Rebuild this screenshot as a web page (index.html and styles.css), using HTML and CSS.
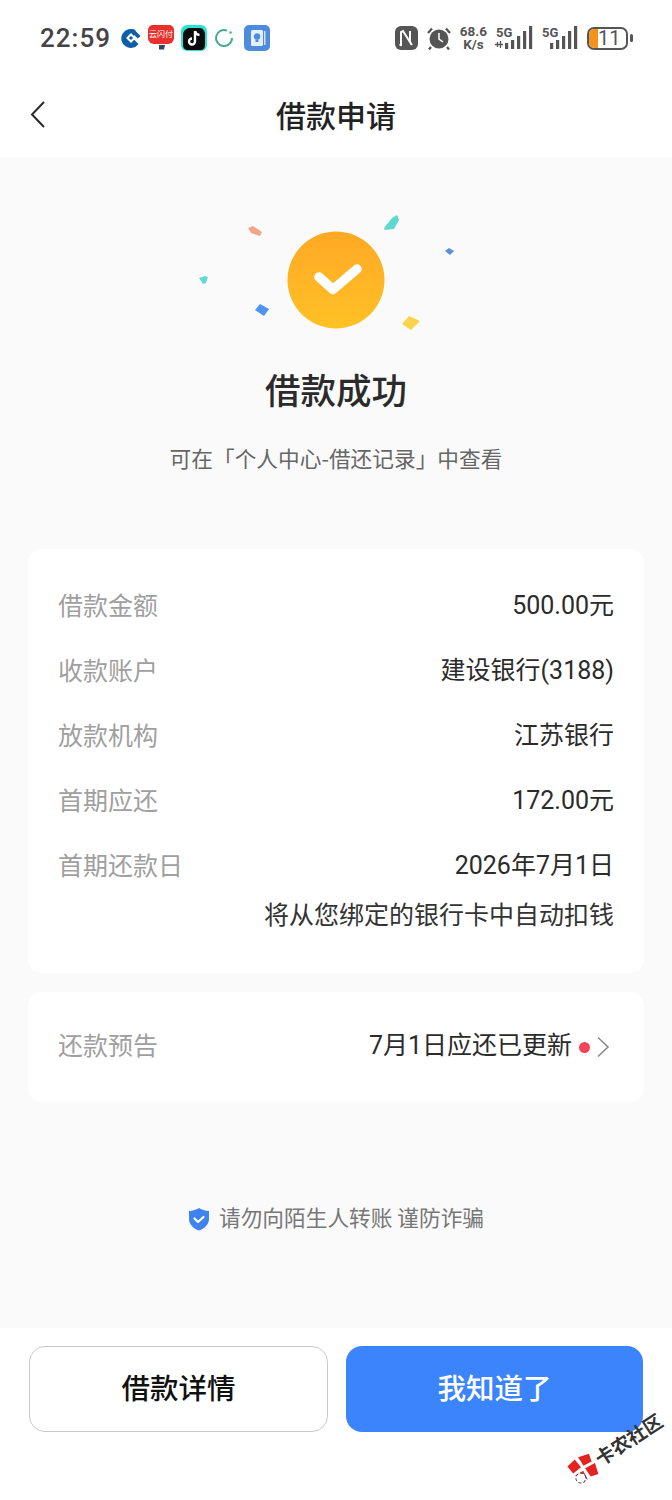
FILE: index.html
```html
<!DOCTYPE html>
<html lang="zh-CN">
<head>
<meta charset="utf-8">
<title>借款申请</title>
<link rel="stylesheet" href="styles.css">
</head>
<body>
<div class="page">
  <header class="top">
    <div class="status">
      <div class="status-left">
        <span class="time">22:59</span>
        <svg class="ic" width="20" height="20" viewBox="0 0 20 20"><path d="M14.500 2.200A9.500 9.500 0 1 0 17.500 16L12 10.500z" fill="#0f5ea8"/><path d="M12.500 1 19.500 8 16.800 10.500 10 4z" fill="#0f5ea8"/><rect x="6.500" y="6.500" width="7" height="7" transform="rotate(45 10 10)" fill="#fff"/><rect x="8.500" y="8.500" width="3" height="3" transform="rotate(45 10 10)" fill="#0f5ea8"/></svg>
        <svg class="ic" width="26" height="26" viewBox="0 0 26 26"><path d="M5 0h16a5 5 0 0 1 5 5v8a6 6 0 0 1-6 6H6a6 6 0 0 1-6-6V5a5 5 0 0 1 5-5z" fill="#e8302c"/><text x="13" y="11.500" text-anchor="middle" class="tiny">云闪付</text><path d="M11 20h6l-1 4.500h-5z" fill="#33475f"/></svg>
        <svg class="ic" width="26" height="26" viewBox="0 0 26 26"><rect width="26" height="26" rx="6" fill="#2ae3d8"/><path d="M2 10c0-4 3-7 7-7h10c3 0 5 3 5 7v10c0 3-2 5-4 5H7c-3 0-5-2-5-5z" fill="#0b0b0d"/><path d="M14 6v10.500a3 3 0 1 1-3-3M14 6c.5 2.500 2 3.800 4.500 4" fill="none" stroke="#fff" stroke-width="2.400"/></svg>
        <svg class="ic ic-ring" width="20" height="20" viewBox="0 0 20 20"><path d="M13 2.600A8 8 0 1 0 18 10" fill="none" stroke="#45ab8f" stroke-width="2"/><circle cx="16.500" cy="4.500" r="1.200" fill="#45ab8f"/></svg>
        <svg class="ic" width="26" height="26" viewBox="0 0 26 26"><rect width="26" height="26" rx="5" fill="#4f8bdc"/><rect x="7" y="5" width="12" height="16" rx="1.500" fill="#e6f0fc"/><rect x="20" y="6" width="1.500" height="14" fill="#cfe0f7"/><circle cx="13" cy="11.500" r="3.200" fill="#4f8bdc"/><rect x="11.500" y="14.500" width="3" height="2.500" fill="#4f8bdc"/></svg>
      </div>
      <div class="status-right">
        <svg width="23" height="24" viewBox="0 0 23 24"><rect width="23" height="24" rx="6" fill="#555"/><path d="M6 20V6l2-1 7 11V5M6 20l-1-2M17 19l-2-3" fill="none" stroke="#fff" stroke-width="2"/></svg>
        <svg class="alarm" width="24" height="24" viewBox="0 0 24 24"><circle cx="12" cy="13" r="9.500" fill="#555"/><path d="M12 7v6l4 3" fill="none" stroke="#fff" stroke-width="1.500"/><path d="M1 7 5 2.500M23 7l-4-4.500M4 21l-2 2.500M20 21l2 2.500" stroke="#555" stroke-width="2.200"/></svg>
        <span class="speed"><span>68.6</span><span>K/s</span></span>
        <span class="sig sig-a">
          <span class="g5">5G</span>
          <svg width="38" height="24" viewBox="0 0 38 24"><path d="M2.500 16v5M5.500 15v7M0 18.500h8" stroke="#555" stroke-width="1.300" fill="none"/><rect x="10" y="17" width="3.200" height="6" fill="#555"/><rect x="16" y="14" width="3.200" height="9" fill="#555"/><rect x="22" y="10" width="3.200" height="13" fill="#555"/><rect x="28" y="5" width="3.200" height="18" fill="#555"/><rect x="34" y="0" width="3.200" height="23" fill="#555"/></svg>
        </span>
        <span class="sig sig-b">
          <span class="g5">5G</span>
          <svg width="28" height="24" viewBox="0 0 28 24"><rect x="0" y="17" width="3.200" height="6" fill="#555"/><rect x="6" y="14" width="3.200" height="9" fill="#555"/><rect x="12" y="10" width="3.200" height="13" fill="#555"/><rect x="18" y="5" width="3.200" height="18" fill="#555"/><rect x="24" y="0" width="3.200" height="23" fill="#555"/></svg>
        </span>
        <span class="battery"><span class="cell"><span class="fill"></span><span class="lvl">11</span></span><span class="nub"></span></span>
      </div>
    </div>
    <div class="nav">
      <svg class="back" width="18" height="30" viewBox="0 0 18 30"><path d="M15 2 3 14.500 15 27" fill="none" stroke="#2a2a2a" stroke-width="2"/></svg>
      <h1 class="nav-title">借款申请</h1>
    </div>
  </header>

  <main class="main">
    <section class="hero">
      <svg class="burst" width="270" height="120" viewBox="0 0 270 120">
        <defs><linearGradient id="g" x1="0" y1="0" x2="0" y2="1"><stop offset="0" stop-color="#ffa925"/><stop offset="1" stop-color="#ffc125"/></linearGradient></defs>
        <circle cx="135" cy="70" r="48.500" fill="url(#g)"/>
        <path d="M118 67 132 79.500 156 59" fill="none" stroke="#fff" stroke-width="9.500" stroke-linecap="round" stroke-linejoin="round"/>
        <path d="M47 18l5-2 9 6-2 4-9-3z" fill="#f6a488"/>
        <path d="M183 18l8-10 5-3 2 5-5 9-9 1z" fill="#5fd8d0"/>
        <path d="M244 41l4-3 5 3-4 4z" fill="#5c8fdb"/>
        <path d="M-2 68l6-2 3 1-2 6-3 1z" fill="#62d9d2"/>
        <path d="M54 100l5-6 9 5-5 7z" fill="#4f93f3"/>
        <path d="M201 114l7-8 11 5-9 9z" fill="#fcd34f"/>
      </svg>
      <h2 class="hero-title">借款成功</h2>
      <p class="hero-sub">可在「个人中心-借还记录」中查看</p>
    </section>

    <section class="card info">
      <div class="row"><span class="label">借款金额</span><span class="value">500.00元</span></div>
      <div class="row"><span class="label">收款账户</span><span class="value">建设银行(3188)</span></div>
      <div class="row"><span class="label">放款机构</span><span class="value">江苏银行</span></div>
      <div class="row"><span class="label">首期应还</span><span class="value">172.00元</span></div>
      <div class="row"><span class="label">首期还款日</span><span class="value">2026年7月1日</span></div>
      <div class="note">将从您绑定的银行卡中自动扣钱</div>
    </section>

    <section class="card notice">
      <span class="label">还款预告</span>
      <span class="notice-right">
        <span class="value">7月1日应还已更新</span>
        <span class="dot"></span>
        <svg width="14" height="22" viewBox="0 0 14 22"><path d="M2 1.500 12 11 2 20.500" fill="none" stroke="#8b8b8b" stroke-width="1.600"/></svg>
      </span>
    </section>

    <div class="safety">
      <svg width="22" height="24" viewBox="0 0 22 24"><path d="M11 1c3 1.800 6 2.700 10 3v8c0 5.500-4.500 9.500-10 11.500C5.500 21.500 1 17.500 1 12V4c4-.3 7-1.200 10-3z" fill="#3f83ee"/><path d="M6.500 11.500 10 15l5.500-5" fill="none" stroke="#fff" stroke-width="2.200" stroke-linecap="round" stroke-linejoin="round"/></svg>
      <span class="safety-text">请勿向陌生人转账 谨防诈骗</span>
    </div>
  </main>

  <footer class="footer">
    <button class="btn btn-line">借款详情</button>
    <button class="btn btn-fill">我知道了</button>
    <div class="mark">
      <svg class="mark-logo" width="27" height="27" viewBox="0 0 27 27"><path d="M1 3l10-2 1 10-10 1z" fill="#e2231f"/><path d="M15 1l11 3-2 8-9-1z" fill="#e2231f"/><path d="M15 14l11 1-3 11-8-2z" fill="#e2231f"/><path d="M2 15l10 0-1 10z" fill="#e2231f"/><circle cx="6" cy="20" r="5" fill="#fff" stroke="#444" stroke-width="1" stroke-dasharray="3 2"/></svg>
      <span class="mark-text">卡农社区</span>
    </div>
  </footer>
</div>
</body>
</html>
```
FILE: styles.css
```css
* { box-sizing: border-box; }
html, body { margin: 0; padding: 0; }
body {
  width: 672px;
  height: 1500px;
  font-family: "Noto Sans CJK SC", "Noto Sans", sans-serif;
  color: #222;
  background: #fff;
  overflow: hidden;
}
.page {
  display: flex;
  flex-direction: column;
  height: 1500px;
}
.top {
  height: 157px;
  background: #fff;
  flex: none;
}
.status {
  height: 76px;
  padding: 0 39px 0 40px;
  display: flex;
  justify-content: space-between;
  align-items: center;
}
.status-left { display: flex; align-items: center; gap: 7px; }
.status-right { display: flex; align-items: center; gap: 9px; }
.ic-ring { margin-right: 3px; }
.tiny {
  font-family: "Noto Sans CJK SC", sans-serif;
  font-size: 8px;
  fill: #fff;
}
.time {
  font-family: "Roboto", sans-serif;
  font-size: 26px;
  font-weight: 500;
  letter-spacing: 1px;
  color: #444;
  margin-right: 3px;
}
.speed {
  display: flex;
  flex-direction: column;
  font-family: "Roboto", sans-serif;
  font-size: 13.500px;
  font-weight: 700;
  line-height: 13.500px;
  color: #555;
  text-align: center;
}
.sig { display: flex; align-items: flex-start; position: relative; height: 24px; }
.sig-a { width: 37px; }
.sig-b { width: 36px; }
.sig svg { position: absolute; right: 0; top: 0; }
.g5 {
  font-family: "Roboto", sans-serif;
  font-size: 13px;
  font-weight: 700;
  line-height: 13px;
  color: #555;
}
.battery { display: flex; align-items: center; gap: 2px; }
.cell {
  position: relative;
  width: 41px;
  height: 23px;
  border: 2px solid #555;
  border-radius: 7px;
  overflow: hidden;
  display: flex;
  align-items: center;
  padding-left: 9px;
}
.fill {
  position: absolute;
  left: 0;
  top: 0;
  bottom: 0;
  width: 9px;
  background: #f5921b;
}
.lvl {
  position: relative;
  font-family: "Roboto", sans-serif;
  font-size: 20px;
  line-height: 19px;
  color: #555;
}
.nub { width: 3px; height: 8px; border-radius: 2px; background: #555; }
.nav {
  position: relative;
  height: 81px;
  display: flex;
  align-items: center;
  justify-content: center;
}
.back { position: absolute; left: 29px; top: 24px; }
.nav-title {
  margin: 0 0 5px;
  font-size: 30px;
  font-weight: 500;
  color: #222;
  line-height: 40px;
}
.main {
  flex: 1;
  background: #fafafa;
  padding: 0 28px;
  display: flex;
  flex-direction: column;
  min-height: 0;
}
.hero {
  height: 392px;
  display: flex;
  flex-direction: column;
  align-items: center;
  padding-top: 53px;
}
.burst { display: block; overflow: visible; flex: none; }
.hero-title {
  margin: 36px 0 0;
  font-size: 35.500px;
  font-weight: 500;
  line-height: 46px;
  color: #2b2b2b;
}
.hero-sub {
  margin: 31px 0 0;
  font-size: 21.700px;
  line-height: 30px;
  color: #666;
}
.card {
  background: #fff;
  border-radius: 14px;
}
.info {
  height: 424px;
  padding: 25px 30px 0;
}
.row {
  height: 65px;
  display: flex;
  justify-content: space-between;
  align-items: center;
}
.label { font-size: 25px; line-height: 32px; color: #9f9f9f; margin-top: -6px; }
.value {
  font-family: "Roboto", "Noto Sans CJK SC", sans-serif;
  font-size: 25px;
  line-height: 32px;
  color: #2b2b2b;
  margin-top: -2px;
}
.note {
  margin-top: -2px;
  text-align: right;
  font-size: 25px;
  line-height: 32px;
  color: #333;
}
.notice {
  margin-top: 19px;
  height: 110px;
  padding: 0 34px 0 30px;
  display: flex;
  justify-content: space-between;
  align-items: center;
}
.notice-right { display: flex; align-items: center; }
.dot {
  width: 11px;
  height: 11px;
  margin: 0 6px 0 7px;
  border-radius: 50%;
  background: #f1455a;
}
.safety {
  margin-top: 101px;
  height: 32px;
  display: flex;
  justify-content: center;
  align-items: center;
  gap: 9px;
  color: #777;
}
.safety-text { font-size: 21.700px; line-height: 32px; margin-top: -4px; }
.footer {
  position: relative;
  flex: none;
  height: 172px;
  background: #fff;
  padding: 18px 29px 0;
  display: flex;
  justify-content: space-between;
  align-items: flex-start;
}
.btn {
  height: 86px;
  font-family: inherit;
  font-size: 28.500px;
  font-weight: 500;
  border-radius: 16px;
  padding: 0 0 6px;
}
.btn-line {
  width: 299px;
  background: #fff;
  border: 1px solid #c9c9c9;
  color: #111;
}
.btn-fill {
  width: 297px;
  background: #3b84fc;
  border: 0;
  color: #fff;
}
.mark {
  position: absolute;
  left: 563px;
  top: 103px;
  width: 112px;
  display: flex;
  align-items: center;
  gap: 2px;
  transform: rotate(-33deg);
}
.mark-logo { flex: none; }
.mark-text {
  white-space: nowrap;
  font-size: 19px;
  font-weight: 700;
  line-height: 28px;
  color: #333;
}
```
